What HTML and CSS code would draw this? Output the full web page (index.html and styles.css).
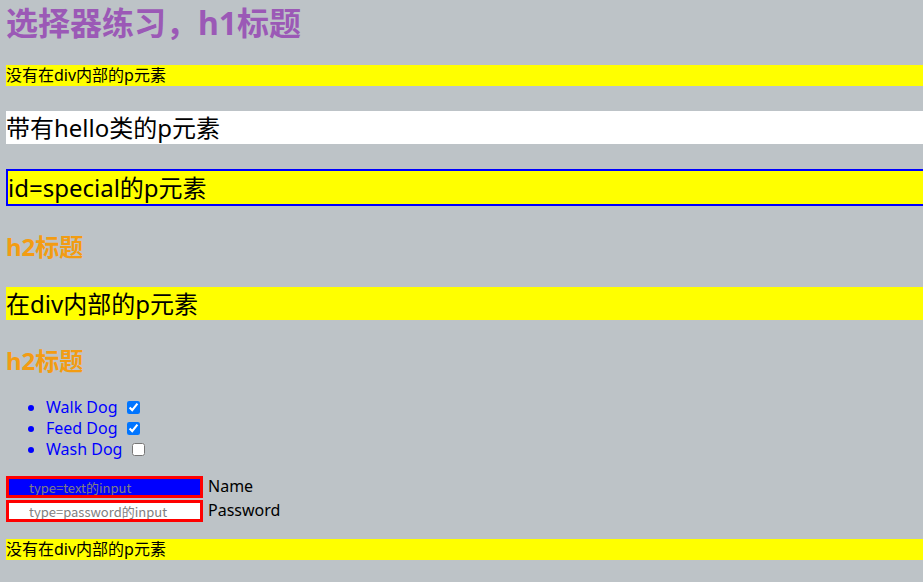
FILE: index.html
```html
<!DOCTYPE html>
<html lang="zh-CN">
<head>
<meta charset="utf-8">
<title>选择器练习</title>
<link rel="stylesheet" href="styles.css">
</head>
<body>
<h1 class="title">选择器练习，h1标题</h1>
<p class="plain">没有在div内部的p元素</p>
<p class="big hello">带有hello类的p元素</p>
<p class="big special" id="special">id=special的p元素</p>
<div class="box">
  <h2 class="sub">h2标题</h2>
  <p class="big inner">在div内部的p元素</p>
</div>
<h2 class="sub">h2标题</h2>
<ul class="todo">
  <li>Walk Dog <input type="checkbox" checked></li>
  <li>Feed Dog <input type="checkbox" checked></li>
  <li>Wash Dog <input type="checkbox"></li>
</ul>
<div class="fields">
  <div class="row"><input class="field text" type="text" placeholder="type=text的input"><span class="label">Name</span></div>
  <div class="row"><input class="field pass" type="password" placeholder="type=password的input"><span class="label">Password</span></div>
</div>
<p class="plain">没有在div内部的p元素</p>
</body>
</html>
```

FILE: styles.css
```css
html {
  overflow: hidden;
  background: #bdc3c7;
}
body {
  margin: 0;
  padding: 2px 0 0 6px;
  width: 1000px;
  font-family: "Noto Sans", "Noto Sans CJK SC", sans-serif;
  color: #000;
}
.title {
  margin: 0 0 21px;
  font-size: 32px;
  line-height: 42px;
  font-weight: 700;
  color: #9b59b6;
}
.plain {
  margin: 16px 0;
  font-size: 16px;
  line-height: 21px;
  background: #ffff00;
}
.big {
  margin: 25px 0;
  font-size: 24px;
  line-height: 33px;
}
.hello {
  background: #ffffff;
}
.special {
  background: #ffff00;
  border: 2px solid #0000ff;
}
.inner {
  background: #ffff00;
}
.sub {
  margin: 20px 0;
  font-size: 24px;
  line-height: 31px;
  font-weight: 700;
  color: #f39c12;
}
.todo {
  margin: 21px 0 15px;
  padding-left: 40px;
  color: #0000ff;
  font-size: 16px;
  line-height: 21px;
}
.todo input {
  margin: 0 0 0 5px;
  width: 13px;
  height: 13px;
  vertical-align: -1px;
}
.fields {
  margin: 15px 0 16px;
}
.row {
  display: flex;
  align-items: center;
  gap: 5px;
  height: 24px;
}
.field {
  box-sizing: border-box;
  width: 197px;
  height: 22px;
  margin: 0;
  padding: 0 0 0 20px;
  border: 3px solid #ff0000;
  font-family: "Noto Sans CJK SC", "Noto Sans", sans-serif;
  font-size: 13px;
  outline: none;
}
.field::placeholder {
  color: #808080;
}
.text {
  background: #0000ff;
}
.pass {
  background: #ffffff;
}
.label {
  font-size: 16px;
  line-height: 21px;
  position: relative;
  top: -1px;
}
```
